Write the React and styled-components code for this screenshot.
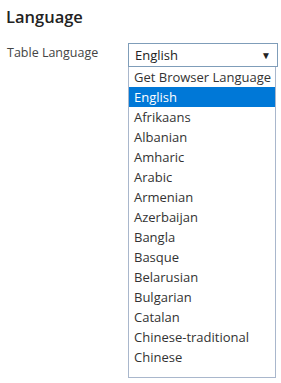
import React from "react";
import styled, { createGlobalStyle } from "styled-components";

const GlobalStyle = createGlobalStyle`
  body {
    margin: 0;
    background: #fff;
    font-family: "Open Sans", "Noto Sans", sans-serif;
    color: #333;
  }
`;

const Page = styled.div`
  width: 281px;
  height: 383px;
  padding: 5px 0 0 6px;
  box-sizing: border-box;
`;

const Heading = styled.h2`
  margin: 0 0 15px 0;
  font-size: 16.5px;
  font-weight: 600;
  line-height: 23px;
  color: #222;
`;

const Row = styled.div`
  display: flex;
  align-items: flex-start;
`;

const Label = styled.div`
  width: 121px;
  font-size: 12.5px;
  line-height: 20px;
  padding-left: 1px;
  color: #444;
`;

const SelectWrap = styled.div`
  display: flex;
  flex-direction: column;
  width: 150px;
`;

const SelectBox = styled.div`
  height: 22px;
  border: 1px solid #7f9db9;
  display: flex;
  align-items: center;
  justify-content: space-between;
  padding: 0 6px 0 6px;
  font-size: 13px;
  color: #222;
`;

const Caret = styled.span`
  font-size: 10px;
  color: #222;
`;

const List = styled.ul`
  list-style: none;
  margin: 0 2px 0 0;
  padding: 0 0 10px 0;
  border: 1px solid #a9b7cc;
  border-top: none;
`;

const Item = styled.li`
  height: 20px;
  line-height: 20px;
  padding-left: 5px;
  font-size: 13px;
  white-space: nowrap;
  background: ${p => (p.selected ? "#0078d7" : "transparent")};
  color: ${p => (p.selected ? "#fff" : "#333")};
`;

const languages = [
  "Get Browser Language",
  "English",
  "Afrikaans",
  "Albanian",
  "Amharic",
  "Arabic",
  "Armenian",
  "Azerbaijan",
  "Bangla",
  "Basque",
  "Belarusian",
  "Bulgarian",
  "Catalan",
  "Chinese-traditional",
  "Chinese",
];

const App = () => (
  <Page>
    <GlobalStyle />
    <Heading>Language</Heading>
    <Row>
      <Label>Table Language</Label>
      <SelectWrap>
        <SelectBox>
          <span>English</span>
          <Caret>▼</Caret>
        </SelectBox>
        <List>
          {languages.map(l => (
            <Item key={l} selected={l === "English"}>{l}</Item>
          ))}
        </List>
      </SelectWrap>
    </Row>
  </Page>
);

export default App;
